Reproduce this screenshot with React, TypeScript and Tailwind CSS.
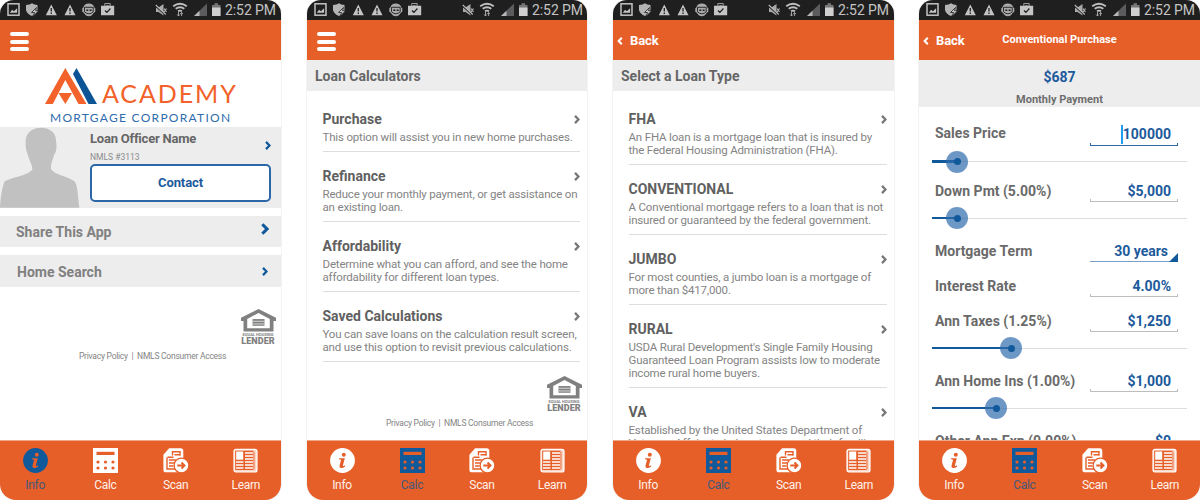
import type { ReactNode } from "react";

const ORANGE = "#e65e28";
const BLUE = "#10599b";

function StatusBar() {
  return (
    <div className="flex h-5 shrink-0 items-center bg-[#1f1f1f] pl-[7px] text-[#c4c4c4]">
      <svg className="shrink-0" width="108" height="20" viewBox="0 0 108 20" fill="none">
        <rect x="1" y="3.8" width="11" height="11.4" stroke="#c4c4c4" strokeWidth="1.5" />
        <path d="M2.8 12.8l2.3-3 1.8 1.5 3.2-3.1v4.6z" fill="#c4c4c4" />
        <path d="M19 5q4-.3 6-1.8 2 1.500 5.500 1.800v5q-1 4-5.500 6-5-2-6-6z" fill="#b4b4b4" />
        <path d="M29.500 7.500l-5 5h3.200l-2 4.200 6-6h-3.200z" fill="#c8c8c8" stroke="#1f1f1f" strokeWidth=".8" />
        <path d="M44.300 4.500l5.500 10.800h-11z" fill="#c4c4c4" />
        <path d="M44.300 8v3.500M44.300 12.500v1.500" stroke="#1f1f1f" strokeWidth="1.300" />
        <path d="M63 4.500l5.500 10.800h-11z" fill="#c4c4c4" />
        <path d="M63 8v3.500M63 12.500v1.500" stroke="#1f1f1f" strokeWidth="1.300" />
        <path d="M76.300 7.500q1-4 5.500-4t5.500 4l1 .7v3.500l-1.500 1q-2 3.500-5 3.500t-5-3.500l-1.500-1V8.200z" fill="#aaa" />
        <path d="M77.500 7.300h8.700v4.500q-2 2-4.300 2t-4.400-2z" stroke="#1f1f1f" strokeWidth=".9" />
        <path d="M79.300 9.500h2v1.500h-2zM82.600 9.500h2v1.500h-2z" fill="#1f1f1f" />
        <path d="M94 5.800h3.500V3.300h6v2.500h3.700v9.400H94z" fill="#c4c4c4" />
        <path d="M98.800 5.800V4.700h3.300v1.100M98 10.500l1.900 1.900 3.500-3.900" stroke="#1f1f1f" strokeWidth="1.200" />
      </svg>
      <svg className="ml-[40px] shrink-0" width="66" height="20" viewBox="0 0 66 20" fill="none">
        <path d="M1 7.500h2.500l5-3.500v11.500L3.500 12H1z" fill="#aaa" />
        <path d="M.5 6l10 9" stroke="#1f1f1f" strokeWidth="1.500" />
        <path d="M.8 5l10 9.500M9 8.500l2.500 3.500M11.500 8.500L9 12" stroke="#b8b8b8" strokeWidth="1.100" />
        <path d="M18.200 6.300q6.800-5 13.600 0M20.700 8.800q4.300-3.300 8.600 0M23 11.200q2-1.200 4 0" stroke="#c0c0c0" strokeWidth="1.900" />
        <path d="M23.500 12v4M22.200 14.500l1.300 1.500 1.300-1.500M26.600 16v-3.500M25.400 14l1.200-1.500 1.200 1.500" stroke="#b0b0b0" strokeWidth=".9" />
        <path d="M52 3.500V16H39z" fill="#5c5c5e" />
        <path d="M44.500 10.700V16H39z" fill="#b8b8b8" />
        <path d="M59.500 3.300h3.500v1.700h2.500V16h-8.500V5h2.500z" fill="#777" />
        <path d="M57 7.500h8.500V16H57z" fill="#cfcfcf" />
      </svg>
      <span className="ml-[4px] whitespace-nowrap text-[14px] leading-5 tracking-[-0.080px]">2:52 PM</span>
    </div>
  );
}

function Chevron({ className, width = 6, height = 9 }: { className: string; width?: number; height?: number }) {
  return (
    <svg className={className} width={width} height={height} viewBox="0 0 6 9" fill="none" stroke="currentColor" strokeWidth="2.300">
      <path d="M1 .9L4.500 4.500 1 8.100" />
    </svg>
  );
}

function MenuHeader() {
  return (
    <div className="flex h-10 shrink-0 flex-col justify-start gap-[3px] bg-[#e65e28] pt-[12px] pl-[10px]">
      <span className="h-[4px] w-[19px] rounded-full bg-white" />
      <span className="mt-[0.500px] h-[4px] w-[19px] rounded-full bg-white" />
      <span className="h-[4px] w-[19px] rounded-full bg-white" />
    </div>
  );
}

function BackHeader({ title }: { title?: string }) {
  return (
    <div className="relative flex h-10 shrink-0 items-center bg-[#e65e28] pt-px pl-[4px] text-white">
      <Chevron className="rotate-180" width={6} height={8} />
      <span className="ml-[7px] text-[13px] font-bold tracking-[-0.100px]">Back</span>
      {title && <span className="absolute inset-x-0 text-center text-[11px] font-bold">{title}</span>}
    </div>
  );
}

function InfoIcon({ active }: { active: boolean }) {
  return (
    <svg width="25" height="25" viewBox="0 0 25 25">
      <circle cx="12.500" cy="12.500" r="12.400" fill={active ? BLUE : "#fff"} />
      <g fill={ORANGE}>
        <circle cx="13.800" cy="6.700" r="2" />
        <path d="M9 10.200h5.800l-1.900 7.300q-.1.900 1.200.3l1-.6v1.300q-2.300 1.800-4.300 1.500-1.800-.3-1.300-2.200l1.500-5.900q-.3-.7-2-.6z" />
      </g>
    </svg>
  );
}

function CalcIcon({ active }: { active: boolean }) {
  return (
    <svg width="25" height="25" viewBox="0 0 25 25">
      <rect width="25" height="25" fill={active ? BLUE : "#fff"} />
      <g fill={ORANGE}>
        <rect x="3.500" y="3.800" width="18" height="3.200" />
        {[5, 12.500, 20].map((x) => [14, 20].map((y) => <circle key={`${x}-${y}`} cx={x} cy={y} r="1.600" />))}
      </g>
    </svg>
  );
}

function ScanIcon() {
  return (
    <svg width="26" height="25" viewBox="0 0 26 25" fill="none">
      <path d="M6.500 1h11.300q1.700 0 1.700 1.700V23.500H3Q1.200 23.500 1.200 22V7z" fill="#fff" stroke="#fff" strokeWidth="1.600" />
      <path d="M9.500 7.500V3.800h7.500v4M11.500 6.700h5M4.500 9.200h6M4 9.500v11.500h8M6 12h7M6 15h6M6 18h4.500" stroke={ORANGE} strokeWidth="1.400" />
      <circle cx="18.500" cy="17.500" r="7.400" fill="#fff" stroke={ORANGE} strokeWidth="1.300" />
      <path d="M14.300 17.500h6.500M18.500 14.500l3 3-3 3" stroke={ORANGE} strokeWidth="1.900" />
    </svg>
  );
}

function LearnIcon() {
  return (
    <svg width="25" height="25" viewBox="0 0 25 25" fill="none">
      <rect x="1" y="1.300" width="23" height="22.700" rx="2" fill="#fbd6c6" stroke="#fff" strokeWidth="1.200" />
      <rect x="2.200" y="2.700" width="18.300" height="19.300" fill={ORANGE} />
      <rect x="3.200" y="3.500" width="7" height="8.200" fill="#fff" />
      <path d="M12 5h8M12 8h8M12 11h8M3 14h7.500M3 17h7.500M3 20h7.500M12 14h8M12 17h8M12 20h8" stroke="#fff" strokeWidth="1.500" />
      <path d="M21.500 4v17" stroke={ORANGE} strokeWidth=".4" />
    </svg>
  );
}

function BottomNav({ active }: { active: "info" | "calc" }) {
  const items: { label: string; icon: ReactNode; on: boolean }[] = [
    { label: "Info", icon: <InfoIcon active={active === "info"} />, on: active === "info" },
    { label: "Calc", icon: <CalcIcon active={active === "calc"} />, on: active === "calc" },
    { label: "Scan", icon: <ScanIcon />, on: false },
    { label: "Learn", icon: <LearnIcon />, on: false },
  ];
  return (
    <nav className="grid h-[60px] shrink-0 grid-cols-4 border-t border-[#f0a688] bg-[#e65e28]">
      {items.map((item) => (
        <div key={item.label} className="flex flex-col items-center pt-[7px]">
          {item.icon}
          <span className={`mt-[4px] text-[12px] leading-4 tracking-[-0.300px] ${item.on ? "text-[#44597a]" : "text-[#fff1ea]"}`}>{item.label}</span>
        </div>
      ))}
    </nav>
  );
}

function Phone({ header, active, className = "w-[281px]", children }: { header: ReactNode; active: "info" | "calc"; className?: string; children: ReactNode }) {
  return (
    <section className={`flex h-[500px] shrink-0 flex-col overflow-hidden rounded-t-[14px] rounded-b-[16px] bg-white shadow-[0_0_0_1px_#f3f3f3] ${className}`}>
      <StatusBar />
      {header}
      <main className="flex min-h-0 flex-1 flex-col overflow-hidden">{children}</main>
      <BottomNav active={active} />
    </section>
  );
}

function Footer() {
  return (
    <div className="flex flex-col">
      <div className="mr-[5px] flex w-[36px] flex-col items-center self-end text-[#808080]">
        <svg width="35" height="23" viewBox="0 0 35 24" fill="none" preserveAspectRatio="none">
          <path d="M17.500 0L35 9v3.500h-2.500V23.500h-30V12.500H0V9z" fill="#808080" />
          <path d="M17.500 4.200L28.800 10.500v9.500H6.200v-9.500z" fill="#fff" />
          <path d="M11.500 10.500h12v7h-12z" fill="#808080" />
          <path d="M11.500 12.800h12M11.500 15.600h12" stroke="#fff" strokeWidth=".7" />
        </svg>
        <span className="mt-px h-[4px] text-[4px] leading-[4px] font-bold whitespace-nowrap">EQUAL HOUSING</span>
        <span className="text-[9px] leading-[8px] font-black tracking-[0.100px] whitespace-nowrap">LENDER</span>
      </div>
      <p className="mt-[6px] pl-[79px] text-[8.500px] leading-[10px] tracking-[-0.250px] whitespace-pre text-[#848484]">Privacy Policy  |  NMLS Consumer Access</p>
    </div>
  );
}

function InfoScreen() {
  return (
    <>
      <div className="flex h-[67px] shrink-0 flex-col pt-[7px]">
        <div className="flex h-[37px] items-end pl-[45px]">
          <svg width="52" height="36" viewBox="0 0 52 36">
            <path d="M20.300 0L41.500 36h-8L20.300 12 7.800 36H0z" fill="#f2622a" />
            <path d="M13.500 25H27l-6.700 11z" fill="#f2622a" />
            <path d="M31.500 0L52 36h-8.500L28 6z" fill="#0c5496" />
          </svg>
          <span className="ml-[5px] h-[24px] font-['Lato',sans-serif] text-[25px] leading-[27px] tracking-[1.900px] text-[#f2622a]">ACADEMY</span>
        </div>
        <span className="mt-[6px] pl-[50px] font-['Lato',sans-serif] text-[12px] leading-[16px] tracking-[1.280px] whitespace-nowrap text-[#2f6cac]">
          MORTGAGE CORPORATION
        </span>
      </div>
      <div className="flex h-[81px] shrink-0 bg-[#ededed]">
        <svg width="80" height="81" viewBox="0 0 240 243" fill="#c1c1c1">
          <path d="M123 2C148 2 169 16 168 42C171 56 170 74 163 82C158 100 152 108 153 126C168 146 198 146 222 162C234 172 233 206 238 242H0C1 214 6 184 13 164C30 150 76 150 97 128C97 112 88 102 83 82C77 68 76 54 77 38C80 14 100 2 123 2z" />
        </svg>
        <div className="flex flex-1 flex-col pl-[10px]">
          <div className="flex h-[37px] justify-between pr-[10px]">
            <div className="flex flex-col pt-[3px]">
              <span className="text-[13px] leading-[18px] font-bold tracking-[-0.220px] text-[#666]">Loan Officer Name</span>
              <span className="mt-[4px] text-[8.500px] leading-[10px] text-[#8c8c8c]">NMLS #3113</span>
            </div>
            <Chevron className="mt-[14px] text-[#10599b]" width={6} height={9} />
          </div>
          <button className="h-[38px] w-[181px] rounded-[5px] border-2 border-[#2c68a8] bg-white text-[13px] font-bold tracking-[-0.100px] text-[#1c5a9c]">Contact</button>
        </div>
      </div>
      <div className="mt-2 flex h-[31px] shrink-0 justify-between bg-[#ededed] pr-[12px] pl-[16px]">
        <span className="text-[14px] leading-[32px] font-bold text-[#808080]">Share This App</span>
        <Chevron className="mt-[7px] text-[#10599b]" width={8} height={12} />
      </div>
      <div className="mt-2 flex h-8 shrink-0 items-center justify-between bg-[#ededed] pr-[13px] pl-[17px]">
        <span className="pt-[2px] text-[14px] font-bold text-[#808080]">Home Search</span>
        <Chevron className="text-[#10599b]" width={6} height={9} />
      </div>
      <div className="mt-[22px]">
        <Footer />
      </div>
    </>
  );
}

function SectionTitle({ children }: { children: ReactNode }) {
  return (
    <h2 className="mb-1 h-[31px] shrink-0 bg-[#ededed] pl-[8px] text-[14px] leading-[33px] font-bold text-[#666]">{children}</h2>
  );
}

function OptionItem({ title, lines }: { title: string; lines: string[] }) {
  return (
    <div className="mr-[7px] ml-[15.500px] flex shrink-0 flex-col border-b border-[#dedede] pt-[14px] pb-[7px]">
      <div className="flex h-[20px] items-center justify-between">
        <span className="text-[14px] font-bold text-[#606060]">{title}</span>
        <Chevron className="text-[#777]" width={6} height={9} />
      </div>
      <div className="mt-[2px] text-[11.500px] leading-[13px] tracking-[-0.170px] whitespace-nowrap text-[#848484]">
        {lines.map((line) => (
          <div key={line}>{line}</div>
        ))}
      </div>
    </div>
  );
}

const calculators = [
  { title: "Purchase", lines: ["This option will assist you in new home purchases."] },
  { title: "Refinance", lines: ["Reduce your monthly payment, or get assistance on", "an existing loan."] },
  { title: "Affordability", lines: ["Determine what you can afford, and see the home", "affordability for different loan types."] },
  { title: "Saved Calculations", lines: ["You can save loans on the calculation result screen,", "and use this option to revisit previous calculations."] },
];

const loanTypes = [
  { title: "FHA", lines: ["An FHA loan is a mortgage loan that is insured by", "the Federal Housing Administration (FHA)."] },
  { title: "CONVENTIONAL", lines: ["A Conventional mortgage refers to a loan that is not", "insured or guaranteed by the federal government."] },
  { title: "JUMBO", lines: ["For most counties, a jumbo loan is a mortgage of", "more than $417,000."] },
  { title: "RURAL", lines: ["USDA Rural Development's Single Family Housing", "Guaranteed Loan Program assists low to moderate", "income rural home buyers."] },
  { title: "VA", lines: ["Established by the United States Department of", "Veterans Affairs to help veterans and their families"] },
];

function Field({ label, value, kind = "plain" }: { label: string; value: string; kind?: "plain" | "focus" | "select" }) {
  return (
    <div className="flex h-[35px] shrink-0 justify-between pt-[8px] pr-[22px] pl-[16px] font-bold">
      <span className="text-[14px] leading-[20px] whitespace-nowrap text-[#6a6a6a]">{label}</span>
      <div className={`relative flex w-[88px] flex-col text-right text-[14px] text-[#1c5a9c] ${kind === "focus" ? "h-[23px] pt-px pr-[7px]" : kind === "select" ? "h-[21px] pr-[10px]" : "h-[21px] pr-[7px]"}`}>
        <span className="leading-[20px]">
          {kind === "focus" && <i className="-mt-[2px] inline-block h-[19px] w-[1.500px] bg-[#1e9cf0] align-middle" />}
          {value}
        </span>
        <i className={`absolute inset-x-0 bottom-0 border-b ${kind === "focus" ? "h-[3px] border-x border-[#2c68a8]" : kind === "select" ? "h-px border-[#7ba0c8]" : "h-[3px] border-x border-[#bdbdbd]"}`} />
        {kind === "select" && (
          <svg className="absolute right-0 bottom-0" width="9" height="9" viewBox="0 0 9 9">
            <path d="M9 0v9H0z" fill={BLUE} />
          </svg>
        )}
      </div>
    </div>
  );
}

function Slider({ value, className }: { value: number; className: string }) {
  return (
    <div className={`relative mr-[13px] ml-[13px] flex h-[20px] shrink-0 items-center ${className}`}>
      <div className="h-px w-full bg-[#dedede]" />
      <div className="absolute left-0 h-[2.500px] bg-[#10599b]" style={{ width: value }} />
      <div className="absolute flex h-[22px] w-[22px] -translate-x-1/2 items-center justify-center rounded-full bg-[#2f6cac]/70" style={{ left: value }}>
        <div className="h-[7px] w-[7px] rounded-full bg-[#10599b]" />
      </div>
    </div>
  );
}

function PurchaseScreen() {
  return (
    <>
      <div className="flex h-[47px] shrink-0 flex-col items-center bg-[#ededed] pt-[7px] font-bold">
        <span className="text-[14px] leading-[20px] text-[#1c5a9c]">$687</span>
        <span className="mt-[5px] text-[11px] leading-[16px] text-[#6e6e6e]">Monthly Payment</span>
      </div>
      <div className="h-2 shrink-0" />
      <Field label="Sales Price" value="100000" kind="focus" />
      <Slider value={25} className="mt-[1.500px] mb-[1.500px]" />
      <Field label="Down Pmt (5.00%)" value="$5,000" />
      <Slider value={25} className="mb-[5px]" />
      <Field label="Mortgage Term" value="30 years" kind="select" />
      <Field label="Interest Rate" value="4.00%" />
      <Field label="Ann Taxes (1.25%)" value="$1,250" />
      <Slider value={79} className="mb-[5px]" />
      <Field label="Ann Home Ins (1.00%)" value="$1,000" />
      <Slider value={64} className="mb-[5px]" />
      <Field label="Other Ann Exp (0.00%)" value="$0" />
    </>
  );
}

export default function App() {
  return (
    <div className="flex h-[500px] w-[1200px] overflow-hidden bg-white font-['Roboto',sans-serif]">
      <Phone header={<MenuHeader />} active="info">
        <InfoScreen />
      </Phone>
      <Phone header={<MenuHeader />} active="calc" className="ml-[26px] w-[280px]">
        <SectionTitle>Loan Calculators</SectionTitle>
        {calculators.map((item) => (
          <OptionItem key={item.title} {...item} />
        ))}
        <div className="mt-[14px]">
          <Footer />
        </div>
      </Phone>
      <Phone header={<BackHeader />} active="calc" className="ml-[26px] w-[281px]">
        <SectionTitle>Select a Loan Type</SectionTitle>
        {loanTypes.map((item) => (
          <OptionItem key={item.title} {...item} />
        ))}
      </Phone>
      <Phone header={<BackHeader title="Conventional Purchase" />} active="calc" className="ml-[25px] w-[281px]">
        <PurchaseScreen />
      </Phone>
    </div>
  );
}
